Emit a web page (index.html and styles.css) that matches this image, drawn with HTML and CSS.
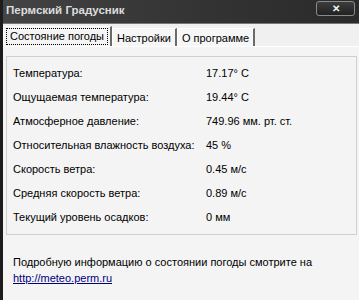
FILE: index.html
```html
<!DOCTYPE html>
<html>
<head>
  <title>Пермский Градусник</title>
  <link rel="stylesheet" href="styles.css">
</head>
<body>
  <div class="window">
    <div class="titlebar">
      <span class="title">Пермский Градусник</span>
      <span class="close">&#x2715;</span>
    </div>
    <div class="tabs">
      <div class="tab active"><span class="focus">Состояние погоды</span></div>
      <div class="tab">Настройки</div>
      <div class="tab">О программе</div>
    </div>
    <div class="panel">
      <div class="group">
        <div class="row"><span class="label">Температура:</span><span>17.17° C</span></div>
        <div class="row"><span class="label">Ощущаемая температура:</span><span>19.44° C</span></div>
        <div class="row"><span class="label">Атмосферное давление:</span><span>749.96 мм. рт. ст.</span></div>
        <div class="row"><span class="label">Относительная влажность воздуха:</span><span>45 %</span></div>
        <div class="row"><span class="label">Скорость ветра:</span><span>0.45 м/с</span></div>
        <div class="row"><span class="label">Средняя скорость ветра:</span><span>0.89 м/с</span></div>
        <div class="row"><span class="label">Текущий уровень осадков:</span><span>0 мм</span></div>
      </div>
      <p class="info">
        Подробную информацию о состоянии погоды смотрите на<br>
        <a href="#">http://meteo.perm.ru</a>
      </p>
    </div>
  </div>
</body>
</html>
```

FILE: styles.css
```css
/* window chrome */
body {
  margin: 0;
  font-family: "Liberation Sans", Arial, sans-serif;
  font-size: 11px;
  color: #000;
  background-color: #f4f4f4;
}
.window {
  height: 300px;
  border-left: 3px solid #1c1c1c; /* dark frame edge */
  display: flex;
  flex-direction: column;
  overflow: hidden;
}
.titlebar {
  height: 23px;
  margin-left: -3px;
  padding: 0 4px 0 6px;
  background: linear-gradient(to right, #444, #363636 45%, #2a2a2a);
  border-bottom: 1px solid #777;
  display: flex;
  align-items: center;
  justify-content: space-between;
}
.title {
  color: #dcdcdc;
  font-weight: bold;
  font-size: 11.5px;
  margin-top: -3px;
}
.close {
  width: 37px;
  height: 13px;
  margin-top: -6px;
  border: 1px solid #8a8a8a;
  border-radius: 3px;
  background: linear-gradient(#3c3c3c, #222);
  color: #f2f2f2;
  font-size: 10px;
  font-weight: bold;
  line-height: 13px;
  text-align: center;
}

/* tabs */
.tabs {
  display: flex;
  align-items: flex-end;
  height: 22px;
  background-color: #f0f0f0;
}
.tab {
  height: 16px;
  padding: 1px 4px 0 4px;
  border-top: 1px solid #fff;
  border-left: 1px solid #fff;
  border-right: 2px solid #6a6a6a;
  background-color: #f6f6f6;
  font-size: 11px;
  line-height: 16px;
  white-space: nowrap;
}
.tab.active {
  height: 19px;
  padding: 0 2px;
  background-color: #f4f4f4;
}
.focus {
  display: inline-block;
  border: 1px dotted #000;
  padding: 0 3px;
  line-height: 15px;
  margin-top: 1px;
}
.panel {
  flex: 1;
  border-top: 1px solid #fff;
  background-color: #f4f4f4;
  padding: 9px 2px 0 3px;
}

/* data box */
.group {
  border: 1px solid #d0d0d0;
  padding: 4px 0 5px 6px;
}
.row {
  display: flex;
  height: 24px;
  align-items: center;
}
.label {
  width: 193px;
}
.info {
  margin: 19px 0 0 7px;
  line-height: 16px;
}
.info a {
  color: #000080;
}
```
